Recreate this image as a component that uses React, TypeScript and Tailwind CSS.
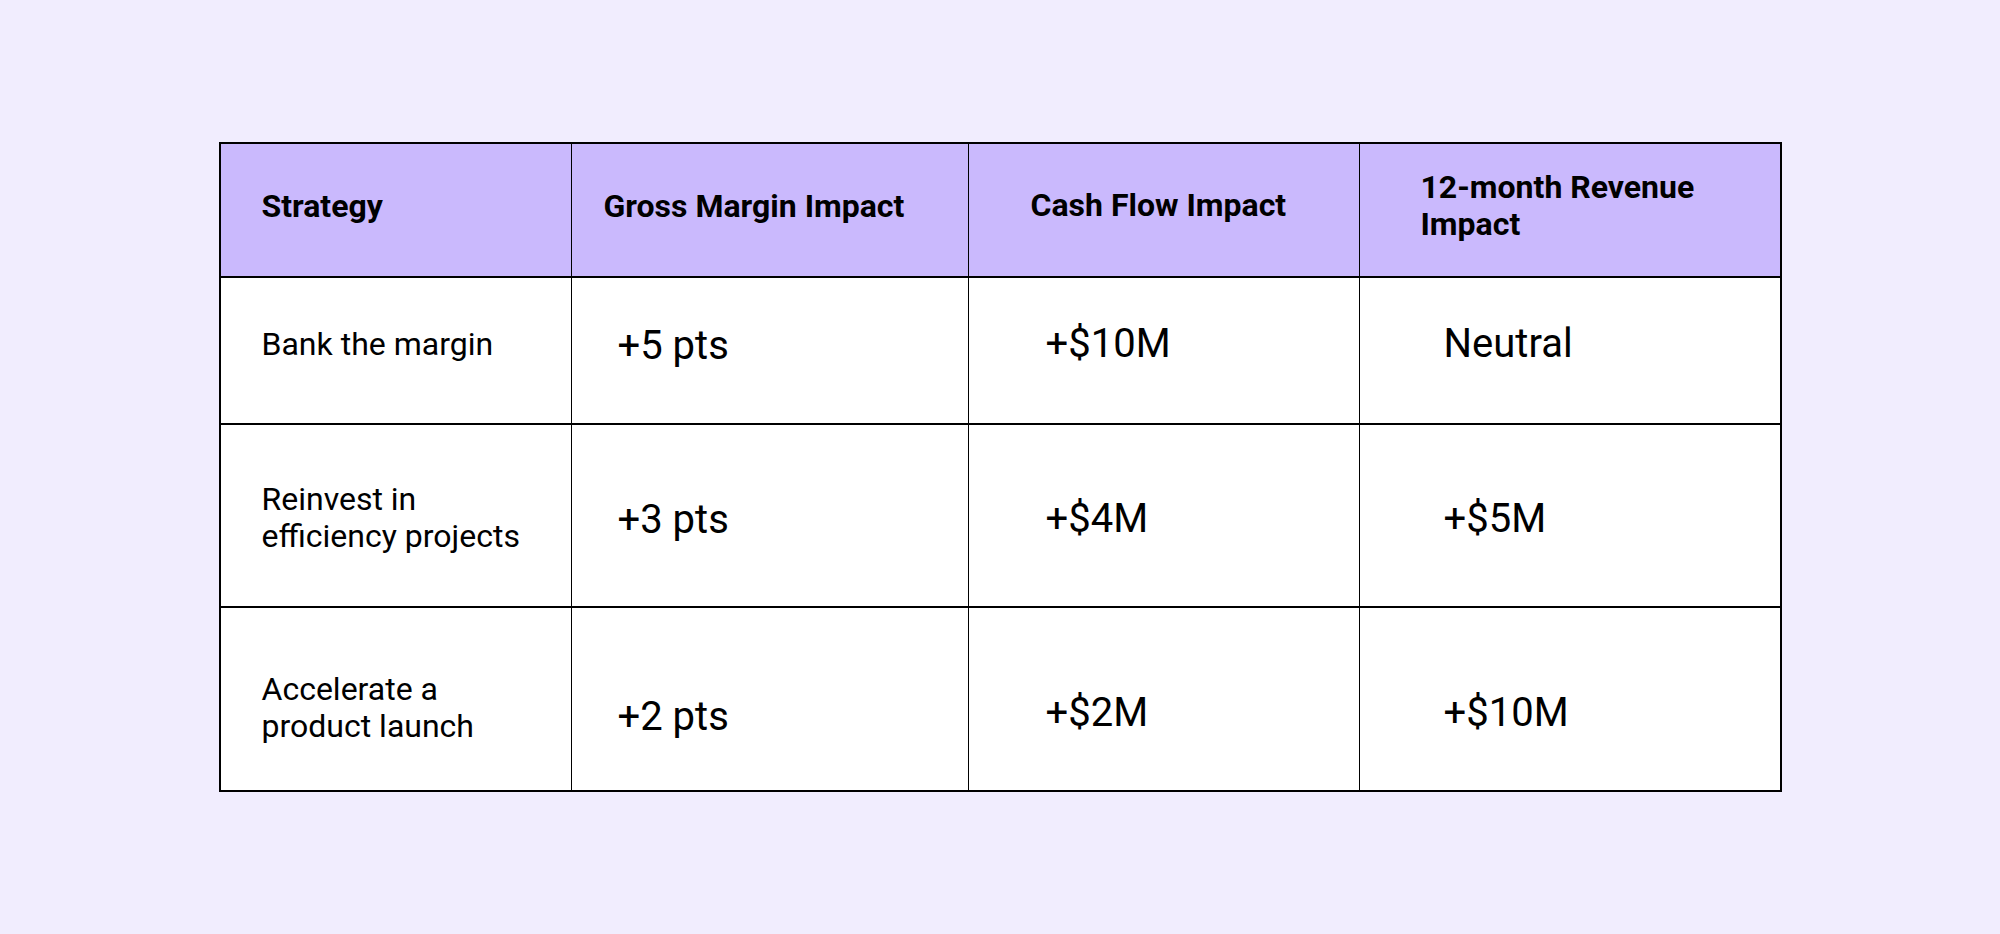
const rows = [
  {
    strategy: ['Bank the margin'],
    margin: '+5 pts',
    cash: '+$10M',
    revenue: 'Neutral',
    height: 'h-[147px]',
    offsets: ['pb-[13px]', 'pb-[10px]', 'pb-[13px]', 'pb-[13px]'],
  },
  {
    strategy: ['Reinvest in', 'efficiency projects'],
    margin: '+3 pts',
    cash: '+$4M',
    revenue: '+$5M',
    height: 'h-[183px]',
    offsets: ['pt-[4px]', 'pt-[8px]', 'pt-[6px]', 'pt-[6px]'],
  },
  {
    strategy: ['Accelerate a', 'product launch'],
    margin: '+2 pts',
    cash: '+$2M',
    revenue: '+$10M',
    height: 'h-[184px]',
    offsets: ['pt-[17px]', 'pt-[36px]', 'pt-[28px]', 'pt-[28px]'],
  },
];

const App = () => {
  return (
    <div
      className="min-h-screen bg-[#f1edfe] flex items-center justify-center text-black"
      style={{ fontFamily: 'Roboto, "Liberation Sans", sans-serif' }}
    >
      <div className="w-[1563px] border-2 border-black bg-white">
        {/* Header */}
        <div className="flex h-[132px] bg-[#cab9fd] text-[32px] font-bold leading-[37px]">
          <div className="w-[350px] flex items-center pl-[41px] pb-[8px]">Strategy</div>
          <div className="w-[397px] flex items-center border-l-[1.5px] border-black pl-[32px] pb-[8px]">
            Gross Margin Impact
          </div>
          <div className="w-[391px] flex items-center border-l-[1.5px] border-black pl-[62px] pb-[10px]">
            Cash Flow Impact
          </div>
          <div className="w-[421px] flex items-center border-l-[1.5px] border-black pl-[61px] pb-[9px]">
            <span>
              12-month Revenue
              <br />
              Impact
            </span>
          </div>
        </div>

        {/* Body */}
        {rows.map((row, i) => (
          <div key={i} className={`flex border-t-2 border-black ${row.height}`}>
            <div className={`w-[350px] flex items-center pl-[41px] text-[32px] leading-[37px] ${row.offsets[0]}`}>
              <span>
                {row.strategy.map((line, j) => (
                  <span key={j} className="block">
                    {line}
                  </span>
                ))}
              </span>
            </div>
            <div
              className={`w-[397px] flex items-center border-l-[1.5px] border-black pl-[46px] text-[40px] ${row.offsets[1]}`}
            >
              {row.margin}
            </div>
            <div
              className={`w-[391px] flex items-center border-l-[1.5px] border-black pl-[77px] text-[40px] ${row.offsets[2]}`}
            >
              {row.cash}
            </div>
            <div
              className={`w-[421px] flex items-center border-l-[1.5px] border-black pl-[84px] text-[40px] ${row.offsets[3]}`}
            >
              {row.revenue}
            </div>
          </div>
        ))}
      </div>
    </div>
  );
};

export default App;
